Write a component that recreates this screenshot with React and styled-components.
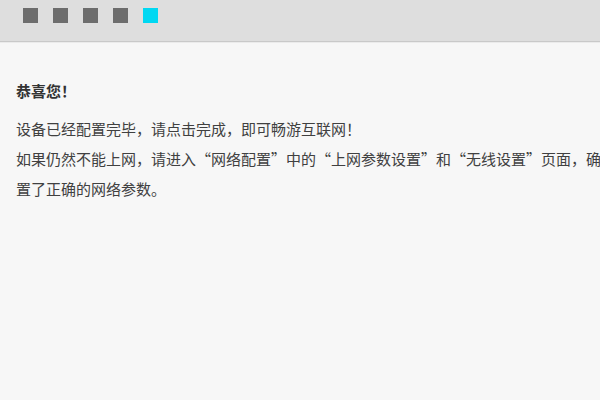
import React from 'react';
import styled, { createGlobalStyle } from 'styled-components';

const GlobalStyle = createGlobalStyle`
  html, body {
    margin: 0;
    padding: 0;
    width: 600px;
    height: 400px;
    overflow: hidden;
    background: #f7f7f7;
  }
`;

const Page = styled.div`
  width: 600px;
  height: 400px;
  overflow: hidden;
  background: #f7f7f7;
  font-family: "Noto Sans CJK SC", "Liberation Sans", sans-serif;
  color: #404040;
`;

const StepBar = styled.div`
  height: 42px;
  background: #dedede;
  border-bottom: 1px solid #c9c9c9;
  box-shadow: 0 1px 0 #ebebeb;
  display: flex;
  align-items: flex-start;
  gap: 15px;
  padding: 8px 0 0 23px;
  box-sizing: border-box;
`;

const Step = styled.span`
  width: 15px;
  height: 15px;
  background: ${props => (props.active ? '#00d8f2' : '#6d6d6d')};
`;

const Content = styled.div`
  width: 615px;
  padding: 34px 0 0 16px;
`;

const Title = styled.h3`
  margin: 0 0 8px;
  font-size: 15px;
  line-height: 30px;
  font-weight: 700;
  color: #333;
`;

const Text = styled.p`
  margin: 0;
  font-size: 15px;
  line-height: 30px;
`;

const steps = [false, false, false, false, true];

const App = () => (
  <>
    <GlobalStyle />
    <Page>
      <StepBar>
        {steps.map((active, i) => (
          <Step key={i} active={active} />
        ))}
      </StepBar>
      <Content>
        <Title>恭喜您！</Title>
        <Text>设备已经配置完毕，请点击完成，即可畅游互联网！</Text>
        <Text>
          如果仍然不能上网，请进入“网络配置”中的“上网参数设置”和“无线设置”页面，确认设置了正确的网络参数。
        </Text>
      </Content>
    </Page>
  </>
);

export default App;
